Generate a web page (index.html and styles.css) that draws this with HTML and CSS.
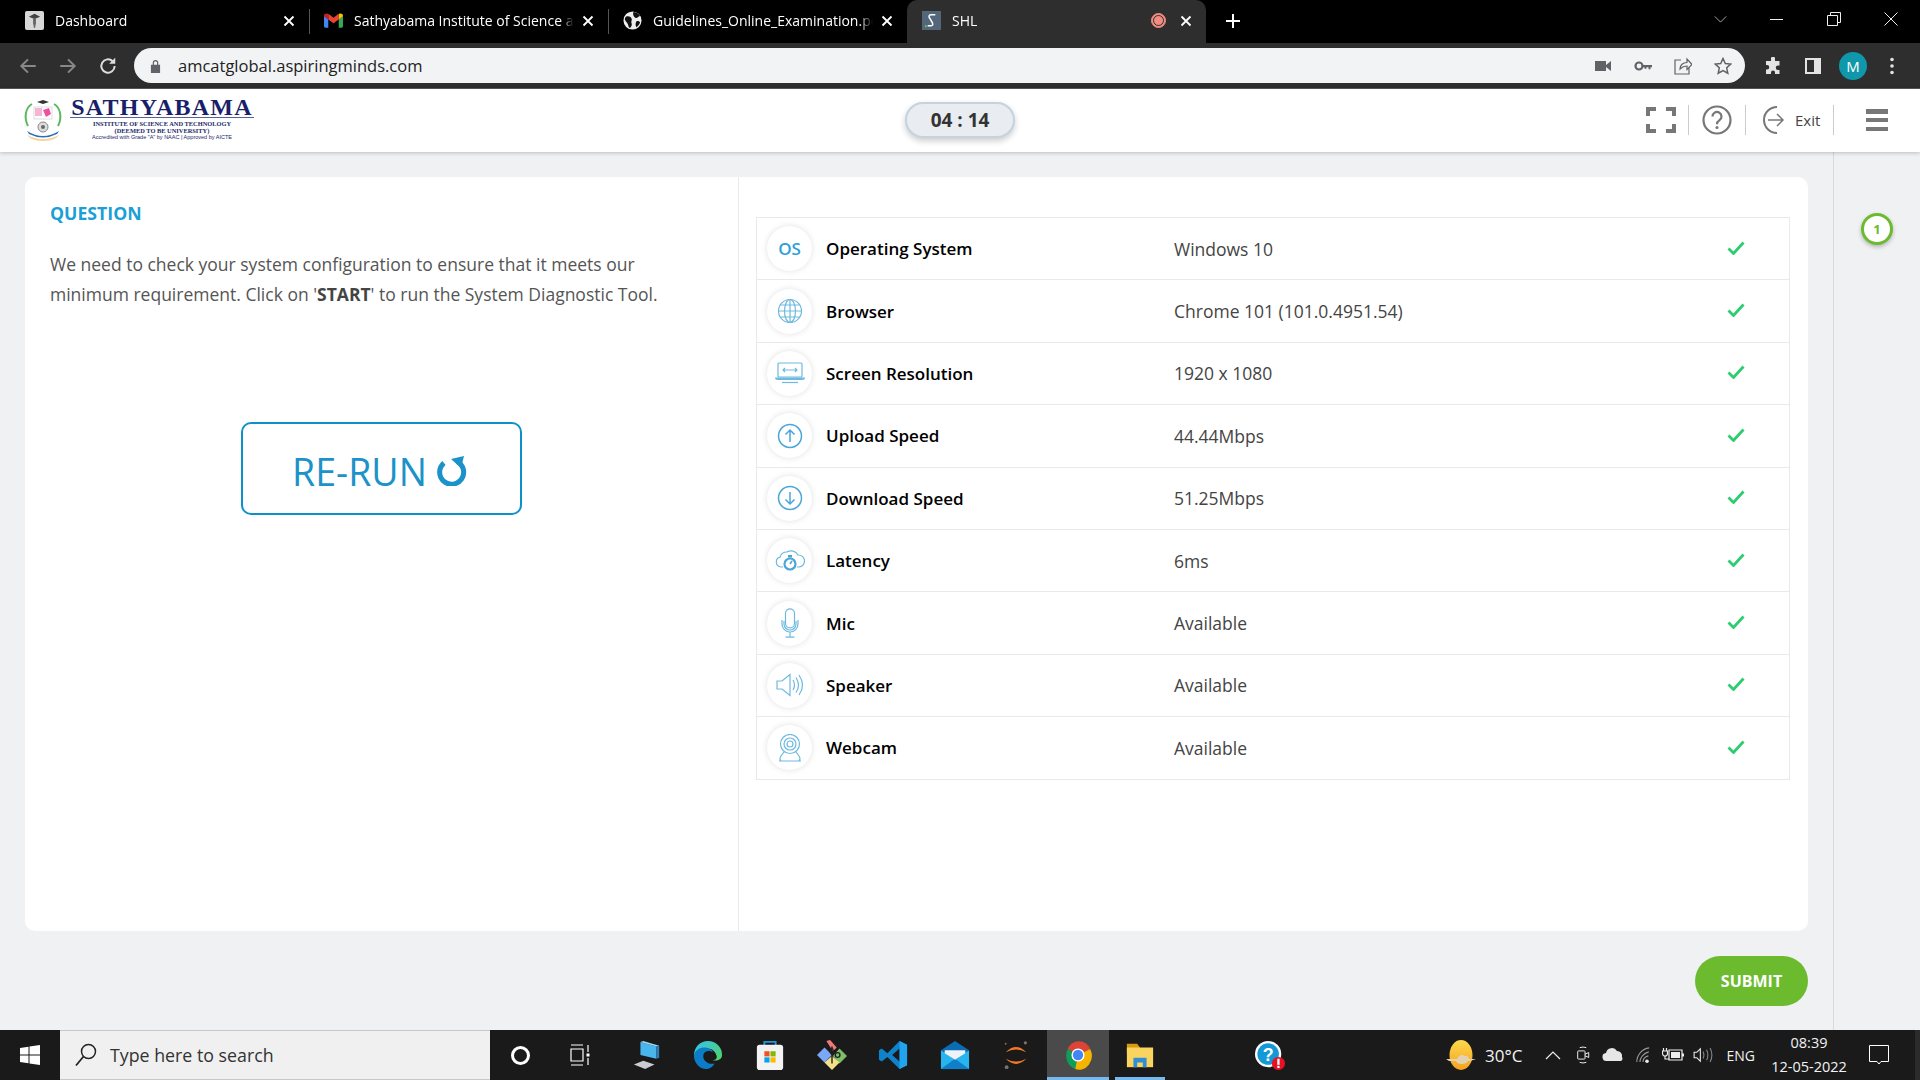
FILE: index.html
```html
<!DOCTYPE html>
<html lang="en">
<head>
<meta charset="utf-8">
<title>SHL</title>
<link rel="stylesheet" href="styles.css">
</head>
<body>
<div class="tabstrip">
  <div class="tab">
    <svg class="favicon" viewBox="0 0 20 20"><rect width="20" height="20" rx="2" fill="#d8d8d8"/><path d="M4 6l6-3 6 3-6 2.500z" fill="#444"/><path d="M8.500 8h3v5l-1 5h-1l-1-5z" fill="#666"/></svg>
    <span class="tab-title">Dashboard</span>
    <svg class="tab-x" viewBox="0 0 12 12"><path d="M1.500 1.500l9 9M10.500 1.500l-9 9"/></svg>
  </div>
  <div class="tab tab-sep">
    <svg class="favicon" viewBox="0 0 20 16"><path d="M0 3v11a1.500 1.500 0 0 0 1.500 1.500H4.500V7z" fill="#4285f4"/><path d="M15.500 7v8.500h3A1.500 1.500 0 0 0 20 14V3z" fill="#34a853"/><path d="M4.500 7L10 11l5.500-4V1l-5.500 4-5.500-4z" fill="#ea4335"/><path d="M0 3c0-2 2.500-3 4-2l.5.4V7L0 3.600z" fill="#c5221f"/><path d="M15.500 1.400L16 1c1.500-1 4 0 4 2v.6L15.500 7z" fill="#fbbc04"/></svg>
    <span class="tab-title">Sathyabama Institute of Science and Technology</span>
    <svg class="tab-x" viewBox="0 0 12 12"><path d="M1.500 1.500l9 9M10.500 1.500l-9 9"/></svg>
  </div>
  <div class="tab tab-sep">
    <svg class="favicon" viewBox="0 0 20 20"><circle cx="10" cy="10" r="9.500" fill="#eee"/><path d="M3 6c3-1 5 0 6 2s-1 3 0 5-1 5-2 5c-2-2-1-4-3-6S1 8 3 6zM11 1c2 0 5 1 7 4-2 1-3 3-5 2s-3-4-2-6zM14 11c2-1 3 0 4 1-1 2-2 4-4 5-1-2-1-4 0-6z" fill="#111"/></svg>
    <span class="tab-title">Guidelines_Online_Examination.pdf</span>
    <svg class="tab-x" viewBox="0 0 12 12"><path d="M1.500 1.500l9 9M10.500 1.500l-9 9"/></svg>
  </div>
  <div class="tab tab-active">
    <svg class="favicon" viewBox="0 0 20 20"><rect width="20" height="20" fill="#54677a"/><path d="M14 4H9.500Q7 4 7.500 6.500L11 12.500q1 3-1.500 3H6" fill="none" stroke="#fff" stroke-width="1.600"/><circle cx="4" cy="16" r="1" fill="#5fd35f"/></svg>
    <span class="tab-title">SHL</span>
    <span class="rec-dot"></span>
    <svg class="tab-x" viewBox="0 0 12 12"><path d="M1.500 1.500l9 9M10.500 1.500l-9 9"/></svg>
  </div>
  <svg class="new-tab" viewBox="0 0 14 14"><path d="M7 0v14M0 7h14"/></svg>
  <div class="win-controls">
    <svg class="win-chevron" viewBox="0 0 14 8"><path d="M.5.500L7 7 13.500.5"/></svg>
    <svg class="win-btn" viewBox="0 0 14 14"><path d="M0 7.500h13"/></svg>
    <svg class="win-btn" viewBox="0 0 14 14"><path d="M.5 3.500h10v10H.5zM3.500 3.500v-3h10v10h-3"/></svg>
    <svg class="win-btn" viewBox="0 0 14 14"><path d="M.5.500l13 13M13.500.500l-13 13"/></svg>
  </div>
</div>

<div class="toolbar">
  <svg class="nav-ico" viewBox="0 0 18 18"><path d="M16 9H3M9 3L3 9l6 6" class="dim"/></svg>
  <svg class="nav-ico" viewBox="0 0 18 18"><path d="M2 9h13M9 3l6 6-6 6" class="dim"/></svg>
  <svg class="nav-ico" viewBox="0 0 18 18"><path d="M15 9a6 6 0 1 1-1.800-4.300" class="lit"/><path d="M15.500 1.500v5.500H10z" class="lit-fill"/></svg>
  <div class="omnibox">
    <svg class="lock" viewBox="0 0 12 15"><path d="M1 6h10v9H1zM3 6V4a3 3 0 0 1 6 0v2" fill="#5f6368"/><path d="M4.300 6V4a1.700 1.700 0 0 1 3.400 0v2z" fill="#f1f3f4"/></svg>
    <span class="url">amcatglobal.aspiringminds.com</span>
    <span class="omni-icons">
      <svg class="omni-ico" viewBox="0 0 18 18"><path d="M1 4h11v10H1zM12 8l5-4v10l-5-4z" fill="#5f6368"/></svg>
      <svg class="omni-ico" viewBox="0 0 18 18"><circle cx="5" cy="9" r="3.500" fill="none" stroke="#5f6368" stroke-width="2.200"/><path d="M8 8h10v2.200h-1.500v2h-2v-2H12.500v1.500h-2V10.200H8z" fill="#5f6368"/></svg>
      <svg class="omni-ico" viewBox="0 0 18 18"><path d="M7 3H1v14h14v-6M6 12c0-4 3-6.500 7-6.500V2l5 5.500-5 5V9c-3 0-5 1-7 3z" fill="none" stroke="#5f6368" stroke-width="1.200"/></svg>
      <svg class="omni-ico" viewBox="0 0 18 18"><path d="M9 1.500l2.300 5 5.400.6-4 3.700 1.100 5.400L9 13.500 4.200 16.200l1.100-5.400-4-3.700 5.400-.6z" fill="none" stroke="#5f6368" stroke-width="1.500"/></svg>
    </span>
  </div>
  <svg class="tool-ico" viewBox="0 0 18 18"><path d="M7 1.500a2 2 0 0 1 4 0V4h4.500v4.500H14a2.200 2.200 0 0 0 0 4.500h1.500V17H11v-1.500a2 2 0 0 0-4 0V17H2v-4.500h1a2.200 2.200 0 0 0 0-4.500H2V4h5z" fill="#e3e3e3"/></svg>
  <svg class="tool-ico" viewBox="0 0 18 18"><path d="M1 1h16v16H1zM3 3v12h7V3z" fill="#e3e3e3" fill-rule="evenodd"/></svg>
  <span class="avatar">M</span>
  <svg class="tool-menu" viewBox="0 0 4 18"><circle cx="2" cy="2.500" r="1.800"/><circle cx="2" cy="9" r="1.800"/><circle cx="2" cy="15.500" r="1.800"/></svg>
</div>

<header class="app-header">
  <div class="logo">
    <svg class="emblem" viewBox="0 0 40 44">
      <path d="M5 28C1 20 2 10 9 6M35 28c4-8 3-18-4-22" fill="none" stroke="#5cb85c" stroke-width="2"/>
      <path d="M14 4l6-2 6 2-6 2z" fill="#333"/>
      <rect x="11" y="9" width="18" height="12" fill="#fff" stroke="#bbb" stroke-width=".5"/>
      <path d="M12 10h7v8h-7z" fill="#f7b5d5"/><path d="M20 12l6-2 2 6-5 3z" fill="#ee4fa0"/>
      <circle cx="20" cy="29" r="5" fill="#ddd" stroke="#888"/><circle cx="20" cy="29" r="2" fill="#666"/>
      <path d="M4 33q16 10 32 0l-2 3q-14 7-28 0z" fill="#2a6db5"/>
      <path d="M4 37q16 8 32 0-4 6-16 6T4 37z" fill="#f5d6a0"/>
    </svg>
    <div class="logo-text">
      <span class="logo-name">SATHYABAMA</span>
      <span class="logo-l1">INSTITUTE OF SCIENCE AND TECHNOLOGY</span>
      <span class="logo-l2">(DEEMED TO BE UNIVERSITY)</span>
      <span class="logo-l3">Accredited with Grade "A" by NAAC | Approved by AICTE</span>
    </div>
  </div>
  <div class="timer">04 : 14</div>
  <div class="header-actions">
    <svg class="act-full" viewBox="0 0 30 26"><path d="M10 2H2v7M20 2h8v7M2 17v7h8M28 17v7h-8" fill="none" stroke="#777" stroke-width="4"/></svg>
    <span class="act-sep act-sep-a"></span>
    <svg class="act-help" viewBox="0 0 30 30"><circle cx="15" cy="15" r="13.500" fill="none" stroke="#777" stroke-width="2.200"/><path d="M10.500 11.500a4.500 4.500 0 1 1 7 3.700c-1.700 1.200-2.500 2-2.500 4" fill="none" stroke="#777" stroke-width="2.200"/><circle cx="15" cy="22.500" r="1.500" fill="#777"/></svg>
    <span class="act-sep act-sep-b"></span>
    <svg class="act-exit" viewBox="0 0 26 30"><path d="M18 2A13 13 0 1 0 18 28" fill="none" stroke="#777" stroke-width="2"/><path d="M9 15h15M18 9l6 6-6 6" fill="none" stroke="#777" stroke-width="1.500"/></svg>
    <span class="act-exit-label">Exit</span>
    <span class="act-sep act-sep-c"></span>
    <span class="burger"><i></i><i></i><i></i></span>
  </div>
</header>

<main class="main">
  <div class="content">
    <section class="card">
      <div class="question">
        <h2 class="q-title">QUESTION</h2>
        <p class="q-text">We need to check your system configuration to ensure that it meets our minimum requirement. Click on '<b>START</b>' to run the System Diagnostic Tool.</p>
        <button class="rerun">RE-RUN
          <svg class="rerun-ico" viewBox="0 0 32 30"><path d="M21 5.500A12 12 0 1 1 8 7" fill="none" stroke="#1b92c9" stroke-width="5"/><path d="M15 3l13-3-3 12z" fill="#1b92c9"/></svg>
        </button>
      </div>
      <div class="diag">
        <div class="table">
          <div class="row">
            <span class="badge"><span class="os">OS</span></span>
            <span class="label">Operating System</span><span class="value">Windows 10</span>
            <svg class="check" viewBox="0 0 18 14"><path d="M1.500 7.500l5 5L16.500 1.500"/></svg>
          </div>
          <div class="row">
            <span class="badge"><svg class="ico" viewBox="0 0 26 26"><g class="ln"><circle cx="13" cy="13" r="11.500"/><ellipse cx="13" cy="13" rx="5.500" ry="11.500"/><path d="M13 1.500v23M1.500 13h23M3.500 7h19M3.500 19h19"/></g></svg></span>
            <span class="label">Browser</span><span class="value">Chrome 101 (101.0.4951.54)</span>
            <svg class="check" viewBox="0 0 18 14"><path d="M1.500 7.500l5 5L16.500 1.500"/></svg>
          </div>
          <div class="row">
            <span class="badge"><svg class="ico ico-wide" viewBox="0 0 30 22"><g class="ln"><rect x="3" y="1" width="24" height="14" rx="1"/><path d="M8 8h14M10 6L8 8l2 2M20 6l2 2-2 2"/><path d="M7 20.500h16"/></g><path d="M0 15.500h30q0 2.500-3 2.500H3q-3 0-3-2.500z" fill="#6db9df"/></svg></span>
            <span class="label">Screen Resolution</span><span class="value">1920 x 1080</span>
            <svg class="check" viewBox="0 0 18 14"><path d="M1.500 7.500l5 5L16.500 1.500"/></svg>
          </div>
          <div class="row">
            <span class="badge"><svg class="ico" viewBox="0 0 26 26"><g class="ln ln-b"><circle cx="13" cy="13" r="11.500"/><path d="M13 19V7M8.500 11.500L13 7l4.500 4.500"/></g></svg></span>
            <span class="label">Upload Speed</span><span class="value">44.44Mbps</span>
            <svg class="check" viewBox="0 0 18 14"><path d="M1.500 7.500l5 5L16.500 1.500"/></svg>
          </div>
          <div class="row">
            <span class="badge"><svg class="ico" viewBox="0 0 26 26"><g class="ln ln-b"><circle cx="13" cy="13" r="11.500"/><path d="M13 7v12M8.500 14.500L13 19l4.500-4.500"/></g></svg></span>
            <span class="label">Download Speed</span><span class="value">51.25Mbps</span>
            <svg class="check" viewBox="0 0 18 14"><path d="M1.500 7.500l5 5L16.500 1.500"/></svg>
          </div>
          <div class="row">
            <span class="badge"><svg class="ico ico-wide" viewBox="0 0 30 24"><g class="ln"><path d="M8 18H6a5 5 0 0 1-1-9.800A7 7 0 0 1 12 3a8 8 0 0 1 11 3 6 6 0 0 1 1 12h-2"/></g><circle cx="15" cy="15" r="5.500" fill="none" stroke="#4aa6d6" stroke-width="2.200"/><path d="M15 15l2-3" stroke="#4aa6d6" stroke-width="1.500"/><rect x="13" y="6" width="4" height="2.500" fill="#4aa6d6"/></svg></span>
            <span class="label">Latency</span><span class="value">6ms</span>
            <svg class="check" viewBox="0 0 18 14"><path d="M1.500 7.500l5 5L16.500 1.500"/></svg>
          </div>
          <div class="row">
            <span class="badge"><svg class="ico ico-tall" viewBox="0 0 18 30"><g class="ln"><rect x="4.500" y=".8" width="9" height="19" rx="4.500"/><path d="M1 12v4a8 8 0 0 0 16 0v-4M3 13v3a6 6 0 0 0 12 0v-3M9 24v5M4.500 29.200h9"/></g></svg></span>
            <span class="label">Mic</span><span class="value">Available</span>
            <svg class="check" viewBox="0 0 18 14"><path d="M1.500 7.500l5 5L16.500 1.500"/></svg>
          </div>
          <div class="row">
            <span class="badge"><svg class="ico ico-wide" viewBox="0 0 28 24"><g class="ln"><path d="M1 8h5l8-6.500v21L6 16H1z"/><path d="M17 7q3 5 0 10M20 4.500q5 7.500 0 15M23 2q7 10 0 20"/></g></svg></span>
            <span class="label">Speaker</span><span class="value">Available</span>
            <svg class="check" viewBox="0 0 18 14"><path d="M1.500 7.500l5 5L16.500 1.500"/></svg>
          </div>
          <div class="row row-last">
            <span class="badge"><svg class="ico ico-tall2" viewBox="0 0 24 28"><g class="ln"><circle cx="12" cy="10" r="9.500"/><circle cx="12" cy="10" r="6"/><circle cx="12" cy="10" r="3"/><path d="M6 18l-3 4q-2 3 0 5h18q2-2 0-5l-3-4M1 27h22"/></g></svg></span>
            <span class="label">Webcam</span><span class="value">Available</span>
            <svg class="check" viewBox="0 0 18 14"><path d="M1.500 7.500l5 5L16.500 1.500"/></svg>
          </div>
        </div>
      </div>
    </section>
    <div class="submit-row"><button class="submit">SUBMIT</button></div>
  </div>
  <aside class="sidebar"><span class="q-num">1</span></aside>
</main>

<footer class="taskbar">
  <div class="start"><svg class="start-ico" viewBox="0 0 20 20"><path d="M0 3l8.500-1.300v7.800H0zM9.500 1.500L20 0v9.500H9.500zM0 10.500h8.500v7.800L0 17zM9.500 10.500H20V20L9.500 18.500z" fill="#fff"/></svg></div>
  <div class="search">
    <svg class="search-ico" viewBox="0 0 22 24"><circle cx="13.500" cy="8.500" r="7" fill="none" stroke="#222" stroke-width="1.500"/><path d="M8.500 13.500L1 22.500" stroke="#222" stroke-width="1.800"/></svg>
    <span class="search-text">Type here to search</span>
  </div>
  <div class="tb-cell"><span class="cortana"></span></div>
  <div class="tb-cell tb-cell-view"><svg class="tb-small" viewBox="0 0 20 22"><path d="M1 1h12M1 21h12M1 5h12v12H1zM18 1v7M18 14v7" fill="none" stroke="#fff" stroke-width="1.200"/><rect x="16.500" y="9.500" width="3" height="3" fill="#fff"/></svg></div>
  <div class="tb-apps">
    <div class="app"><svg class="app-ico" viewBox="0 0 32 32"><path d="M9 2l17 5v13L9 16z" fill="#4ab5ec"/><path d="M9 2l3-1 17 5-3 1z" fill="#9bd8f5"/><path d="M26 7l3-1v13l-3 1z" fill="#2f7db5"/><path d="M2 26l10-4 12 4-10 5z" fill="#c9ccd0"/></svg></div>
    <div class="app"><svg class="app-ico" viewBox="0 0 32 32"><defs><linearGradient id="eg" x1="0" y1="0" x2="1" y2="1"><stop offset="0" stop-color="#35c1f1"/><stop offset="1" stop-color="#52d35f"/></linearGradient></defs><path d="M16 1a15 15 0 0 1 15 15c0 5-6 7-10 5.500 4 0 5-3 4-5C24 12 20 9 15 9 9 9 3 13 1 17 1 8 7 1 16 1z" fill="url(#eg)"/><path d="M1 17c0-5 6-10 12-9 5 .8 8 3 8 5-3-2-9-2-10 3-1 6 6 11 12 9-2 4-6 6-9 6C7 31 1 24 1 17z" fill="#0c7cc7"/></svg></div>
    <div class="app"><svg class="app-ico" viewBox="0 0 32 32"><path d="M10 8V2h12v6" fill="none" stroke="#1d9ad6" stroke-width="2"/><rect x="2" y="5" width="28" height="27" rx="3" fill="#f3f3f3"/><path d="M10 12h5.500v5.500H10z" fill="#f25022"/><path d="M16.500 12H22v5.500h-5.500z" fill="#7fba00"/><path d="M10 18.500h5.500V24H10z" fill="#00a4ef"/><path d="M16.500 18.500H22V24h-5.500z" fill="#ffb900"/></svg></div>
    <div class="app"><svg class="app-ico" viewBox="0 0 32 32"><path d="M8 8l8 8-8 8-8-8z" fill="#7aa7f7"/><path d="M10 1l4-1 7 8-4 4z" fill="#f37a7a"/><path d="M24 9l8 8-8 8-7-8z" fill="#7fbf6a"/><path d="M16 32l-8-8 8-7 8 7z" fill="#f5e08a"/><path d="M16 8l2 5-2 3-2-3zM16 17v8" stroke="#222" stroke-width="1.500" fill="none"/><circle cx="22" cy="16" r="2.500" fill="none" stroke="#222" stroke-width="1.500"/></svg></div>
    <div class="app"><svg class="app-ico" viewBox="0 0 32 32"><path d="M23 1l8 4v22l-8 4-13-13-6 5-3-2v-10l3-2 6 5zM23 9l-8 7 8 7z" fill="#0f83ca" fill-rule="evenodd"/><path d="M23 1l8 4v22l-8 4z" fill="#22a3ee"/></svg></div>
    <div class="app"><svg class="app-ico" viewBox="0 0 32 32"><path d="M1 11h30v20H1z" fill="#28b4ef"/><path d="M1 31l15-11 15 11z" fill="#0f7fc9"/><path d="M16 1L1 11l15 10 15-10z" fill="#0a6cb5"/><path d="M5 11h22v3l-11 7-11-7z" fill="#eef3f7"/></svg></div>
    <div class="app"><svg class="app-ico" viewBox="0 0 32 32"><path d="M5 13q11-11 22 0-11-6-22 0zM5 20q11 11 22 0-11 6-22 0z" fill="#f37726"/><circle cx="26" cy="3" r="1.700" fill="#767677"/><circle cx="6" cy="29" r="2" fill="#767677"/><circle cx="5" cy="4" r="1" fill="#767677"/></svg></div>
    <div class="app app-on"><svg class="app-ico" viewBox="0 0 32 32"><path d="M16 16L5 9.500A13.500 15 0 0 1 29 9.500z" fill="#db4437"/><path d="M16 16L5 9.500A13.500 15 0 0 0 13 31z" fill="#0f9d58"/><path d="M16 16L29 9.500A13.500 15 0 0 1 13 31z" fill="#f4b400"/><circle cx="16" cy="16" r="7" fill="#fff"/><circle cx="16" cy="16" r="5.500" fill="#4285f4"/></svg></div>
    <div class="app app-open"><svg class="app-ico" viewBox="0 0 32 32"><path d="M2 4h11l3 4v6H2z" fill="#d99a10"/><path d="M2 8h28v21H2z" fill="#fbd35f"/><path d="M9 19h14v10h-4v-5h-6v5H9z" fill="#2f8ed8"/></svg></div>
  </div>
  <div class="app app-help"><svg class="app-ico" viewBox="0 0 32 32"><circle cx="14" cy="15" r="14" fill="#fff"/><circle cx="14" cy="15" r="11.500" fill="#1499d6"/><text x="14" y="22" class="help-q">?</text><circle cx="25" cy="25" r="7" fill="#e81123"/><rect x="23.800" y="20" width="2.400" height="6.500" fill="#fff"/><rect x="23.800" y="27.500" width="2.400" height="2.400" fill="#fff"/></svg></div>
  <div class="tray">
    <svg class="weather" viewBox="0 0 30 32"><defs><linearGradient id="sun" x1="0" y1="0" x2="0" y2="1"><stop offset="0" stop-color="#ffd94d"/><stop offset="1" stop-color="#f4a21f"/></linearGradient></defs><ellipse cx="15" cy="16" rx="11.500" ry="15" fill="url(#sun)"/><path d="M0 20h11q3-6 8-3 3-1 4 3h7l-6 2H22q-2 3-6 3-5 0-6-3H3z" fill="#e3d2b2"/></svg>
    <span class="temp">30°C</span>
    <span class="tray-ico"><svg class="t-svg" viewBox="0 0 16 16"><path d="M1 12l7-7 7 7" class="tl"/></svg></span>
    <span class="tray-ico"><svg class="t-svg" viewBox="0 0 16 22"><path d="M4 2q4-1.500 8 0M4 20q4 1.500 8 0" class="tl"/><rect x="1.500" y="6" width="9" height="10" rx="1" class="tl"/><path d="M10.500 10l4.500-2v6l-4.500-2" class="tl"/></svg></span>
    <span class="tray-ico"><svg class="t-svg-w" viewBox="0 0 22 16"><path d="M5 14a4 4 0 0 1-1-8 6 6 0 0 1 11-2 5 5 0 0 1 5 6 3 3 0 0 1-1 4z" fill="#e6e6e6"/></svg></span>
    <span class="tray-ico"><svg class="t-svg" viewBox="0 0 18 20"><path d="M2 18C2 10 8 3 16 2M5.500 18c0-5 4-10 10-11.500M9 18c0-3 2-6 6-7" class="tl tl-dim"/><circle cx="13.500" cy="17" r="2" fill="#eee"/></svg></span>
    <span class="tray-ico"><svg class="t-svg-w" viewBox="0 0 22 16"><path d="M7 3h13v10H7z" class="tl"/><path d="M9 5h9v6H9z" fill="#eee"/><rect x="20" y="6.500" width="2" height="3" fill="#eee"/><path d="M1.500 1v3M4.500 1v3M.5 4h5v2.500a2.500 2.500 0 0 1-5 0zM3 9v3h4" class="tl"/></svg></span>
    <span class="tray-ico"><svg class="t-svg-w" viewBox="0 0 22 18"><path d="M1 6h3l4-4v14l-4-4H1z" class="tl"/><path d="M11 5q2 4 0 8M15 3q3 6 0 12M19 1q4 8 0 16" class="tl tl-faint"/></svg></span>
    <span class="lang">ENG</span>
    <span class="clock"><span>08:39</span><span>12-05-2022</span></span>
    <span class="notif"><svg class="notif-ico" viewBox="0 0 20 20"><path d="M.5.500h19v16H12L10 19l-2-2.500H.5z" fill="none" stroke="#fff"/></svg></span>
  </div>
</footer>
</body>
</html>
```
FILE: styles.css
```css
* { box-sizing: border-box; }
html, body { margin: 0; height: 100%; }
body {
  width: 1920px; height: 1080px; overflow: hidden;
  display: flex; flex-direction: column;
  font-family: "Open Sans", "Noto Sans", sans-serif;
  background: #f0f1f3;
}

/* browser tab strip */
.tabstrip { height: 43px; background: #000; display: flex; padding-left: 10px; flex: none; }
.tab { width: 299px; height: 43px; display: flex; align-items: center; padding: 0 14px 2px 15px; position: relative; color: #fff; }
.tab-sep::before { content: ""; position: absolute; left: 0; top: 9px; height: 25px; width: 1px; background: #555; }
.tab-active { background: #2e2e2e; border-radius: 10px 10px 0 0; }
.favicon { width: 19px; height: 19px; flex: none; }
.tab-title {
  flex: 1; min-width: 0; margin-left: 11px; font-size: 14px; white-space: nowrap; overflow: hidden;
  -webkit-mask-image: linear-gradient(to left, transparent 0, #000 14px);
  mask-image: linear-gradient(to left, transparent 0, #000 14px);
}
.tab-x { width: 12px; height: 12px; flex: none; margin-left: 8px; }
.tab-x path { stroke: #fff; stroke-width: 1.800; fill: none; }
.rec-dot { width: 15px; height: 15px; border-radius: 50%; background: #f28b82; border: 1px solid #f28b82; outline: 1px solid #2e2e2e; outline-offset: -3px; flex: none; margin-right: 6px; }
.new-tab { width: 14px; height: 14px; margin: 14px 0 0 20px; flex: none; }
.new-tab path { stroke: #fff; stroke-width: 2; fill: none; }
.win-controls { margin-left: auto; display: flex; align-items: flex-start; }
.win-chevron { width: 13px; height: 7px; margin: 16px 43px 0 0; }
.win-chevron path { stroke: #bbb; fill: none; }
.win-btn { width: 14px; height: 14px; margin: 12px 43px 0 0; }
.win-btn path { stroke: #eee; fill: none; }
.win-btn:last-child { margin-right: 22px; }

/* toolbar */
.toolbar { height: 45px; background: #2e2e2e; display: flex; align-items: center; padding: 0 0 0 18px; flex: none; }
.nav-ico { width: 20px; height: 20px; margin-right: 20px; flex: none; }
.nav-ico:nth-child(3) { margin-right: 16px; }
.dim { stroke: #888; stroke-width: 1.800; fill: none; }
.lit { stroke: #ddd; stroke-width: 1.800; fill: none; }
.lit-fill { fill: #ddd; }
.omnibox { width: 1611px; height: 35px; border-radius: 18px; background: #f1f3f4; display: flex; align-items: center; padding: 0 13px 0 16px; flex: none; }
.lock { width: 11px; height: 14px; flex: none; }
.url { font-size: 16.500px; color: #222; margin-left: 17px; }
.omni-icons { margin-left: auto; display: flex; gap: 22px; }
.omni-ico { width: 18px; height: 18px; }
.tool-ico { width: 18px; height: 18px; margin-left: 19px; flex: none; }
.tool-ico + .tool-ico { margin-left: 22px; }
.avatar { width: 28px; height: 28px; border-radius: 50%; background: #0f97ab; color: #fff; font-size: 15px; display: flex; align-items: center; justify-content: center; margin-left: 17px; flex: none; }
.tool-menu { width: 4px; height: 18px; margin-left: 23px; fill: #e3e3e3; flex: none; }

/* app header */
.app-header { height: 64px; padding-bottom: 1px; background: #fff; border-top: 1px solid #555; box-shadow: 0 1px 4px rgba(0,0,0,.22); display: grid; grid-template-columns: 1fr auto 1fr; align-items: center; flex: none; position: relative; z-index: 1; }
.logo { display: flex; align-items: center; padding-left: 23px; }
.emblem { width: 40px; height: 44px; flex: none; }
.logo-text { display: flex; flex-direction: column; align-items: center; margin-left: 7px; width: 184px; font-family: "Liberation Serif", serif; color: #1a1f6b; line-height: 1; }
.logo-name { font-size: 24px; font-weight: 700; letter-spacing: 1.200px; border-bottom: 1px solid #5a5f9a; width: 100%; text-align: center; height: 19px; line-height: 17px; white-space: nowrap; }
.logo-l1 { font-size: 6.400px; font-weight: 700; margin-top: 2px; line-height: 7px; white-space: nowrap; }
.logo-l2 { font-size: 6.400px; font-weight: 700; line-height: 7px; white-space: nowrap; }
.logo-l3 { font-size: 5.500px; font-family: "Liberation Sans", sans-serif; line-height: 7px; white-space: nowrap; }
.timer { width: 110px; height: 36px; border-radius: 18px; background: #e9ecf0; border: 2px solid #c4d3e0; box-shadow: 0 3px 6px rgba(0,0,0,.2); color: #333; font-size: 19px; font-weight: 700; display: flex; align-items: center; justify-content: center; }
.header-actions { display: flex; align-items: center; justify-self: end; }
.act-full { width: 30px; height: 26px; flex: none; }
.act-sep { width: 1px; height: 30px; background: #ccc; flex: none; }
.act-sep-a { margin-left: 12px; }
.act-help { width: 30px; height: 30px; margin-left: 13px; flex: none; }
.act-sep-b { margin-left: 13px; }
.act-exit { width: 26px; height: 30px; margin-left: 13px; flex: none; }
.act-exit-label { font-size: 15px; color: #444; margin-left: 10px; width: 29px; }
.act-sep-c { margin-left: 9px; }
.burger { width: 22px; height: 22px; margin: 0 32px; display: flex; flex-direction: column; justify-content: space-between; flex: none; }
.burger i { display: block; height: 4.500px; background: #777; }

/* main */
.main { flex: 1; min-height: 0; display: flex; background: #f0f1f3; }
.content { width: 1833px; padding: 25px 25px 0; display: flex; flex-direction: column; flex: none; }
.card { height: 754px; background: #fff; border-radius: 10px; display: flex; flex: none; }
.question { width: 714px; padding: 25px 25px 0; border-right: 1px solid #e8e9ec; display: flex; flex-direction: column; flex: none; }
.q-title { margin: 0; font-size: 17.700px; font-weight: 700; color: #1a9fd6; line-height: 22px; }
.q-text { margin: 25px 0 0; font-size: 17.500px; line-height: 30px; color: #555; }
.q-text b { color: #444; }
.rerun { width: 281px; height: 93px; margin: 113px auto 0; border: 2px solid #1090c8; border-radius: 10px; background: #fff; color: #1b92c9; font-family: "Open Sans", sans-serif; font-size: 37.500px; display: flex; align-items: center; justify-content: center; gap: 9px; padding: 5px 3px 0 0; }
.rerun-ico { width: 32px; height: 30px; flex: none; }
.diag { flex: 1; min-width: 0; padding: 40px 18px 0 17px; }
.table { border: 1px solid #e8e9ec; border-bottom: 0; }
.row { height: 62.400px; display: grid; grid-template-columns: 45px 334px 1fr 18px; column-gap: 14px; align-items: center; padding: 0 44px 0 10px; border-bottom: 1px solid #e8e9ec; }
.row .check { width: 18px; height: 14px; margin-top: -2px; }
.check path { fill: none; stroke: #2ecc71; stroke-width: 2.800; }
.badge { width: 45px; height: 45px; border-radius: 50%; background: #fff; box-shadow: 0 0 6px rgba(0,0,0,.12); display: flex; align-items: center; justify-content: center; }
.os { color: #2f9fd6; font-size: 17px; font-weight: 600; }
.ico { width: 26px; height: 26px; }
.ico-wide { width: 30px; height: 24px; }
.ico-tall { width: 18px; height: 30px; }
.ico-tall2 { width: 24px; height: 28px; }
.ln { fill: none; stroke: #6db9df; stroke-width: 1.200; }
.ln-b { stroke: #4aa6d6; stroke-width: 1.500; }
.label { font-size: 17px; font-weight: 600; color: #000; }
.value { font-size: 17.500px; color: #444; }
.submit-row { display: flex; justify-content: flex-end; padding-top: 25px; }
.submit { width: 113px; height: 50px; border: 0; border-radius: 25px; background: #6cbb2f; color: #fff; font-family: "Open Sans", sans-serif; font-size: 16px; font-weight: 700; padding: 0; }
.sidebar { flex: 1; border-left: 1px solid #d8d9dc; display: flex; justify-content: center; padding-top: 61px; }
.q-num { width: 32px; height: 32px; border-radius: 50%; background: #fff; border: 3px solid #6cbb2f; color: #6cbb2f; font-size: 13px; font-weight: 700; display: flex; align-items: center; justify-content: center; box-shadow: 0 2px 4px rgba(0,0,0,.25); }

/* taskbar */
.taskbar { height: 50px; background: #1a1a1a; display: flex; align-items: center; flex: none; color: #fff; border-right: 5px solid #2b2b2b; }
.start { width: 60px; height: 50px; display: flex; align-items: center; justify-content: center; flex: none; }
.start-ico { width: 20px; height: 20px; }
.search { width: 430px; height: 50px; background: #f0f0f0; border-top: 1px solid #c8c8c8; border-bottom: 1px solid #c8c8c8; display: flex; align-items: center; padding-left: 15px; flex: none; }
.search-ico { width: 22px; height: 24px; flex: none; }
.search-text { color: #333; font-size: 17.800px; margin-left: 13px; }
.tb-cell { width: 61px; height: 50px; display: flex; align-items: center; justify-content: center; flex: none; }
.tb-cell-view { width: 57px; }
.cortana { width: 19px; height: 19px; border: 3px solid #fff; border-radius: 50%; }
.tb-small { width: 20px; height: 22px; }
.tb-apps { display: flex; flex: none; margin-left: 8px; }
.app { width: 61.600px; height: 50px; display: flex; align-items: center; justify-content: center; flex: none; }
.app-on { background: #4a4a4a; box-shadow: inset 0 -3px #76b9ed; }
.app-open { position: relative; }
.app-open::after { content: ""; position: absolute; left: 6px; right: 5px; bottom: 0; height: 3px; background: #76b9ed; }
.app-ico { width: 30px; height: 30px; }
.app-help { margin-left: 69px; }
.help-q { font: 700 19px "Liberation Sans", sans-serif; fill: #fff; text-anchor: middle; }
.tray { margin-left: auto; display: flex; align-items: center; height: 50px; flex: none; }
.weather { width: 30px; height: 32px; flex: none; }
.temp { font-size: 17px; margin-left: 9px; width: 53px; color: #f2f2f2; }
.tray-ico { width: 30px; height: 50px; display: flex; align-items: center; justify-content: center; flex: none; }
.t-svg { width: 16px; height: 18px; }
.t-svg-w { width: 22px; height: 16px; }
.tl { fill: none; stroke: #eee; stroke-width: 1.200; }
.tl-dim { stroke: #999; }
.tl-faint { stroke: #888; }
.lang { font-size: 14px; margin-left: 8.500px; width: 40px; color: #f2f2f2; }
.clock { width: 76px; display: flex; flex-direction: column; align-items: center; font-size: 14.500px; line-height: 24px; color: #f2f2f2; margin-left: 4.500px; }
.notif { width: 26px; display: flex; justify-content: center; margin: 0 23px 0 19px; }
.notif-ico { width: 20px; height: 20px; }
```
